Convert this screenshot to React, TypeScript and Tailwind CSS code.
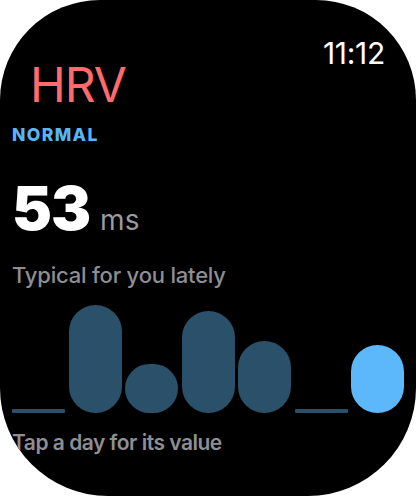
import React from "react";

type Day = { kind: "bar" | "line"; height: number; active?: boolean };

const days: Day[] = [
  { kind: "line", height: 4 },
  { kind: "bar", height: 108 },
  { kind: "bar", height: 49 },
  { kind: "bar", height: 102 },
  { kind: "bar", height: 72 },
  { kind: "line", height: 4 },
  { kind: "bar", height: 68, active: true },
];

function DayBar({ day }: { day: Day }) {
  if (day.kind === "line") {
    return <div className="h-[4px] w-full rounded-[1px] bg-[#2b5069]" />;
  }
  return (
    <div
      className={day.active ? "w-full rounded-full bg-[#5cb8fa]" : "w-full rounded-full bg-[#2b5069]"}
      style={{ height: day.height }}
    />
  );
}

function App() {
  return (
    <div className="h-[496px] w-[416px] bg-white">
      <div
        className="flex h-full w-full flex-col overflow-hidden rounded-t-[100px] rounded-b-[108px] bg-black text-white"
        style={{ fontFamily: "Inter, 'Noto Sans', sans-serif" }}
      >
        <div className="flex items-start justify-between pr-[31px] pt-[38px]">
          <div className="ml-[30px] mt-[23px] text-[48px] leading-none tracking-[-1px] text-[#ff6b6b]">HRV</div>
          <div className="text-[30px] leading-none tracking-[-0.3px]">11:12</div>
        </div>

        <div className="ml-[12px] mt-[17px] text-[17.5px] font-extrabold leading-none tracking-[1.4px] text-[#5ab4f5]">
          NORMAL
        </div>

        <div className="ml-[12px] mt-[34px] flex items-baseline gap-[10px] leading-none">
          <span className="text-[60px] font-black tracking-[-1px]">53</span>
          <span className="text-[28px] text-[#9a9a9f]">ms</span>
        </div>

        <div className="ml-[12px] mt-[26px] text-[22px] font-medium leading-none tracking-[-0.2px] text-[#8e8e93]">
          Typical for you lately
        </div>

        <div className="mx-[12px] mt-[19px] grid h-[108px] grid-cols-7 items-end gap-[3.5px]">
          {days.map((d, i) => (
            <DayBar key={i} day={d} />
          ))}
        </div>

        <div className="ml-[12px] mt-[19px] text-[21px] font-semibold leading-none tracking-[-0.5px] text-[#8e8e93]">
          Tap a day for its value
        </div>
      </div>
    </div>
  );
}

export default App;
